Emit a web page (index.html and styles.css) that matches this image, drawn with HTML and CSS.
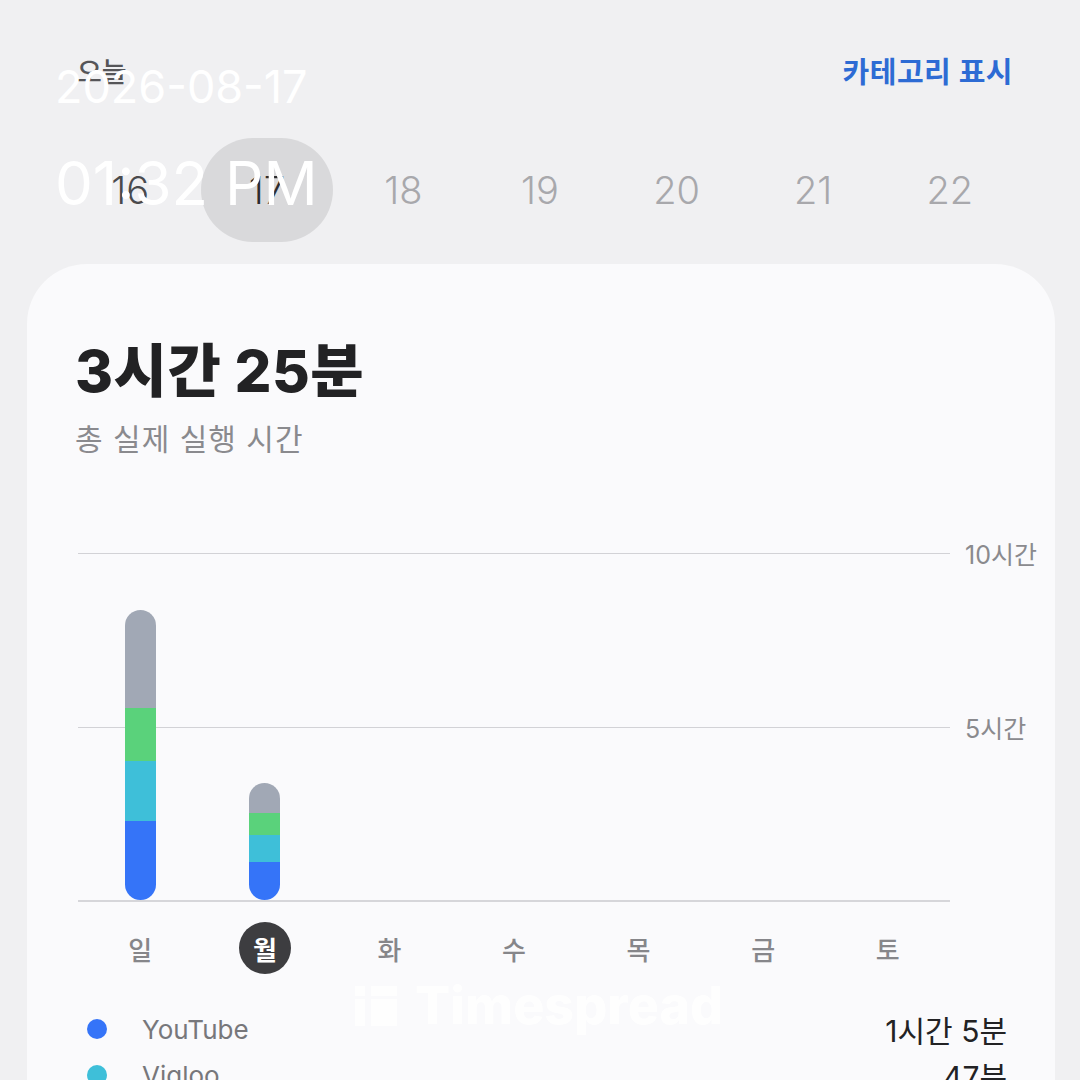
FILE: index.html
```html
<!DOCTYPE html>
<html lang="ko">
<head>
  <meta charset="UTF-8" />
  <meta name="viewport" content="width=device-width, initial-scale=1.0"/>
  <title>스크린 타임</title>
  <link rel="stylesheet" href="styles.css">
</head>
<body>

<div class="header">
  <span class="today">오늘</span>
  <a href="#" class="cat-link">카테고리 표시</a>
</div>

<div class="week">
  <div class="day past">16</div>
  <div class="day current">17</div>
  <div class="day">18</div>
  <div class="day">19</div>
  <div class="day">20</div>
  <div class="day">21</div>
  <div class="day">22</div>
</div>

<div class="card">
  <h1 class="total">3시간 25분</h1>
  <p class="total-sub">총 실제 실행 시간</p>

  <div class="chart">
    <div class="lines">
      <div class="gl"><span class="rule"></span><span class="axis">10시간</span></div>
      <div class="gl"><span class="rule"></span><span class="axis">5시간</span></div>
      <div class="gl base"><span class="rule"></span><span class="axis"></span></div>
    </div>
    <div class="bars">
      <div class="col">
        <div class="bar">
          <div class="seg other" style="height: 98px"></div>
          <div class="seg green" style="height: 53px"></div>
          <div class="seg teal" style="height: 60px"></div>
          <div class="seg blue" style="height: 79px"></div>
        </div>
      </div>
      <div class="col">
        <div class="bar">
          <div class="seg other" style="height: 30px"></div>
          <div class="seg green" style="height: 22px"></div>
          <div class="seg teal" style="height: 27px"></div>
          <div class="seg blue" style="height: 38px"></div>
        </div>
      </div>
      <div class="col"></div>
      <div class="col"></div>
      <div class="col"></div>
      <div class="col"></div>
      <div class="col"></div>
    </div>
  </div>

  <div class="weekdays">
    <span class="wd">일</span>
    <span class="wd active">월</span>
    <span class="wd">화</span>
    <span class="wd">수</span>
    <span class="wd">목</span>
    <span class="wd">금</span>
    <span class="wd">토</span>
  </div>

  <ul class="legend">
    <li><span class="dot blue"></span><span class="app">YouTube</span><span class="time">1시간 5분</span></li>
    <li><span class="dot teal"></span><span class="app">Vigloo</span><span class="time">47분</span></li>
  </ul>
</div>

<div class="stamp">
  <div class="stamp-date">2026-08-17</div>
  <div class="stamp-time">01:32 PM</div>
</div>

<div class="watermark">
  <svg width="42" height="40" viewBox="0 0 42 40">
    <rect x="0" y="0" width="10" height="10" fill="#fff"/>
    <rect x="0" y="13" width="10" height="27" fill="#fff"/>
    <rect x="16" y="0" width="26" height="10" fill="#fff"/>
    <rect x="16" y="13" width="26" height="27" fill="#fff"/>
  </svg>
  <span>Timespread</span>
</div>

</body>
</html>
```

FILE: styles.css
```css
body {
  margin: 0;
  background: #f0f0f2;
  font-family: Inter, "Noto Sans CJK KR", sans-serif;
  width: 1080px;
  height: 1080px;
  overflow: hidden;
  position: relative;
}
.header {
  display: flex;
  justify-content: space-between;
  align-items: center;
  padding: 50px 67px 0 77px;
  height: 40px;
}
.today {
  font-size: 27px;
  font-weight: 500;
  color: #555558;
}
.cat-link {
  font-size: 29px;
  font-weight: 700;
  letter-spacing: 0.5px;
  color: #2d6bd4;
  text-decoration: none;
}
.week {
  display: grid;
  grid-template-columns: repeat(7, 1fr);
  padding: 0 62px;
  margin-top: 48px;
}
.day {
  height: 104px;
  display: flex;
  align-items: center;
  justify-content: center;
  font-size: 38px;
  font-weight: 300;
  color: #a8a8ac;
}
.day.past { color: #4a4a4d; }
.day.current {
  color: #2c2c2e;
  background: #d9d9db;
  border-radius: 52px;
  margin: 0 2px;
}
.card {
  margin: 22px 25px 0 27px;
  background: #fafafc;
  border-radius: 60px 60px 0 0;
  padding: 78px 0 0 48px;
  height: 900px;
}
.total {
  margin: 0;
  font-size: 58px;
  line-height: 1;
  font-weight: 800;
  letter-spacing: 0.5px;
  color: #222224;
}
.total-sub {
  margin: 24px 0 0;
  font-size: 30px;
  line-height: 1;
  letter-spacing: 1px;
  color: #8a8a8e;
}
.chart {
  display: grid;
  margin: 99px 0 0 3px;
  width: 977px;
}
.lines, .bars { grid-area: 1 / 1; }
.lines {
  height: 348px;
  display: flex;
  flex-direction: column;
  justify-content: space-between;
}
.gl {
  height: 0;
  display: flex;
  align-items: center;
}
.rule {
  flex: 1;
  border-top: 1.5px solid #d2d2d6;
}
.gl.base .rule { border-top: 2px solid #d6d6da; }
.axis {
  width: 90px;
  margin-left: 15px;
  font-size: 25px;
  color: #8a8a8e;
}
.bars {
  width: 872px;
  height: 347px;
  display: grid;
  grid-template-columns: repeat(7, 1fr);
  align-items: end;
}
.col {
  display: flex;
  justify-content: center;
}
.bar {
  width: 31px;
  border-radius: 16px;
  overflow: hidden;
  display: flex;
  flex-direction: column;
}
.other { background: #a1a8b5; }
.green { background: #5ad27b; }
.teal { background: #3ebfd9; }
.blue { background: #3574f8; }
.weekdays {
  width: 872px;
  margin: 21px 0 0 3px;
  display: grid;
  grid-template-columns: repeat(7, 1fr);
  justify-items: center;
}
.wd {
  width: 52px;
  height: 52px;
  display: flex;
  align-items: center;
  justify-content: center;
  font-size: 26px;
  font-weight: 500;
  color: #86868a;
}
.wd.active {
  background: #3d3d40;
  color: #fff;
  font-weight: 700;
  border-radius: 50%;
}
.legend {
  list-style: none;
  margin: 32px 48px 0 12px;
  padding: 0;
}
.legend li {
  display: flex;
  align-items: center;
  height: 46px;
}
.dot {
  width: 20px;
  height: 20px;
  border-radius: 50%;
  margin-right: 35px;
}
.app {
  flex: 1;
  font-size: 26px;
  color: #77777b;
}
.time {
  font-size: 30px;
  color: #222224;
}
.stamp {
  position: absolute;
  left: 55px;
  top: 64px;
  color: #fff;
  font-family: Inter, sans-serif;
}
.stamp-date {
  font-size: 45px;
  line-height: 1;
}
.stamp-time {
  font-size: 60px;
  line-height: 1;
  margin-top: 44px;
}
.watermark {
  position: absolute;
  left: 355px;
  top: 980px;
  display: flex;
  align-items: center;
  gap: 18px;
  opacity: 0.9;
}
.watermark span {
  font-size: 52px;
  font-weight: 800;
  color: #fff;
  line-height: 1;
}
```
